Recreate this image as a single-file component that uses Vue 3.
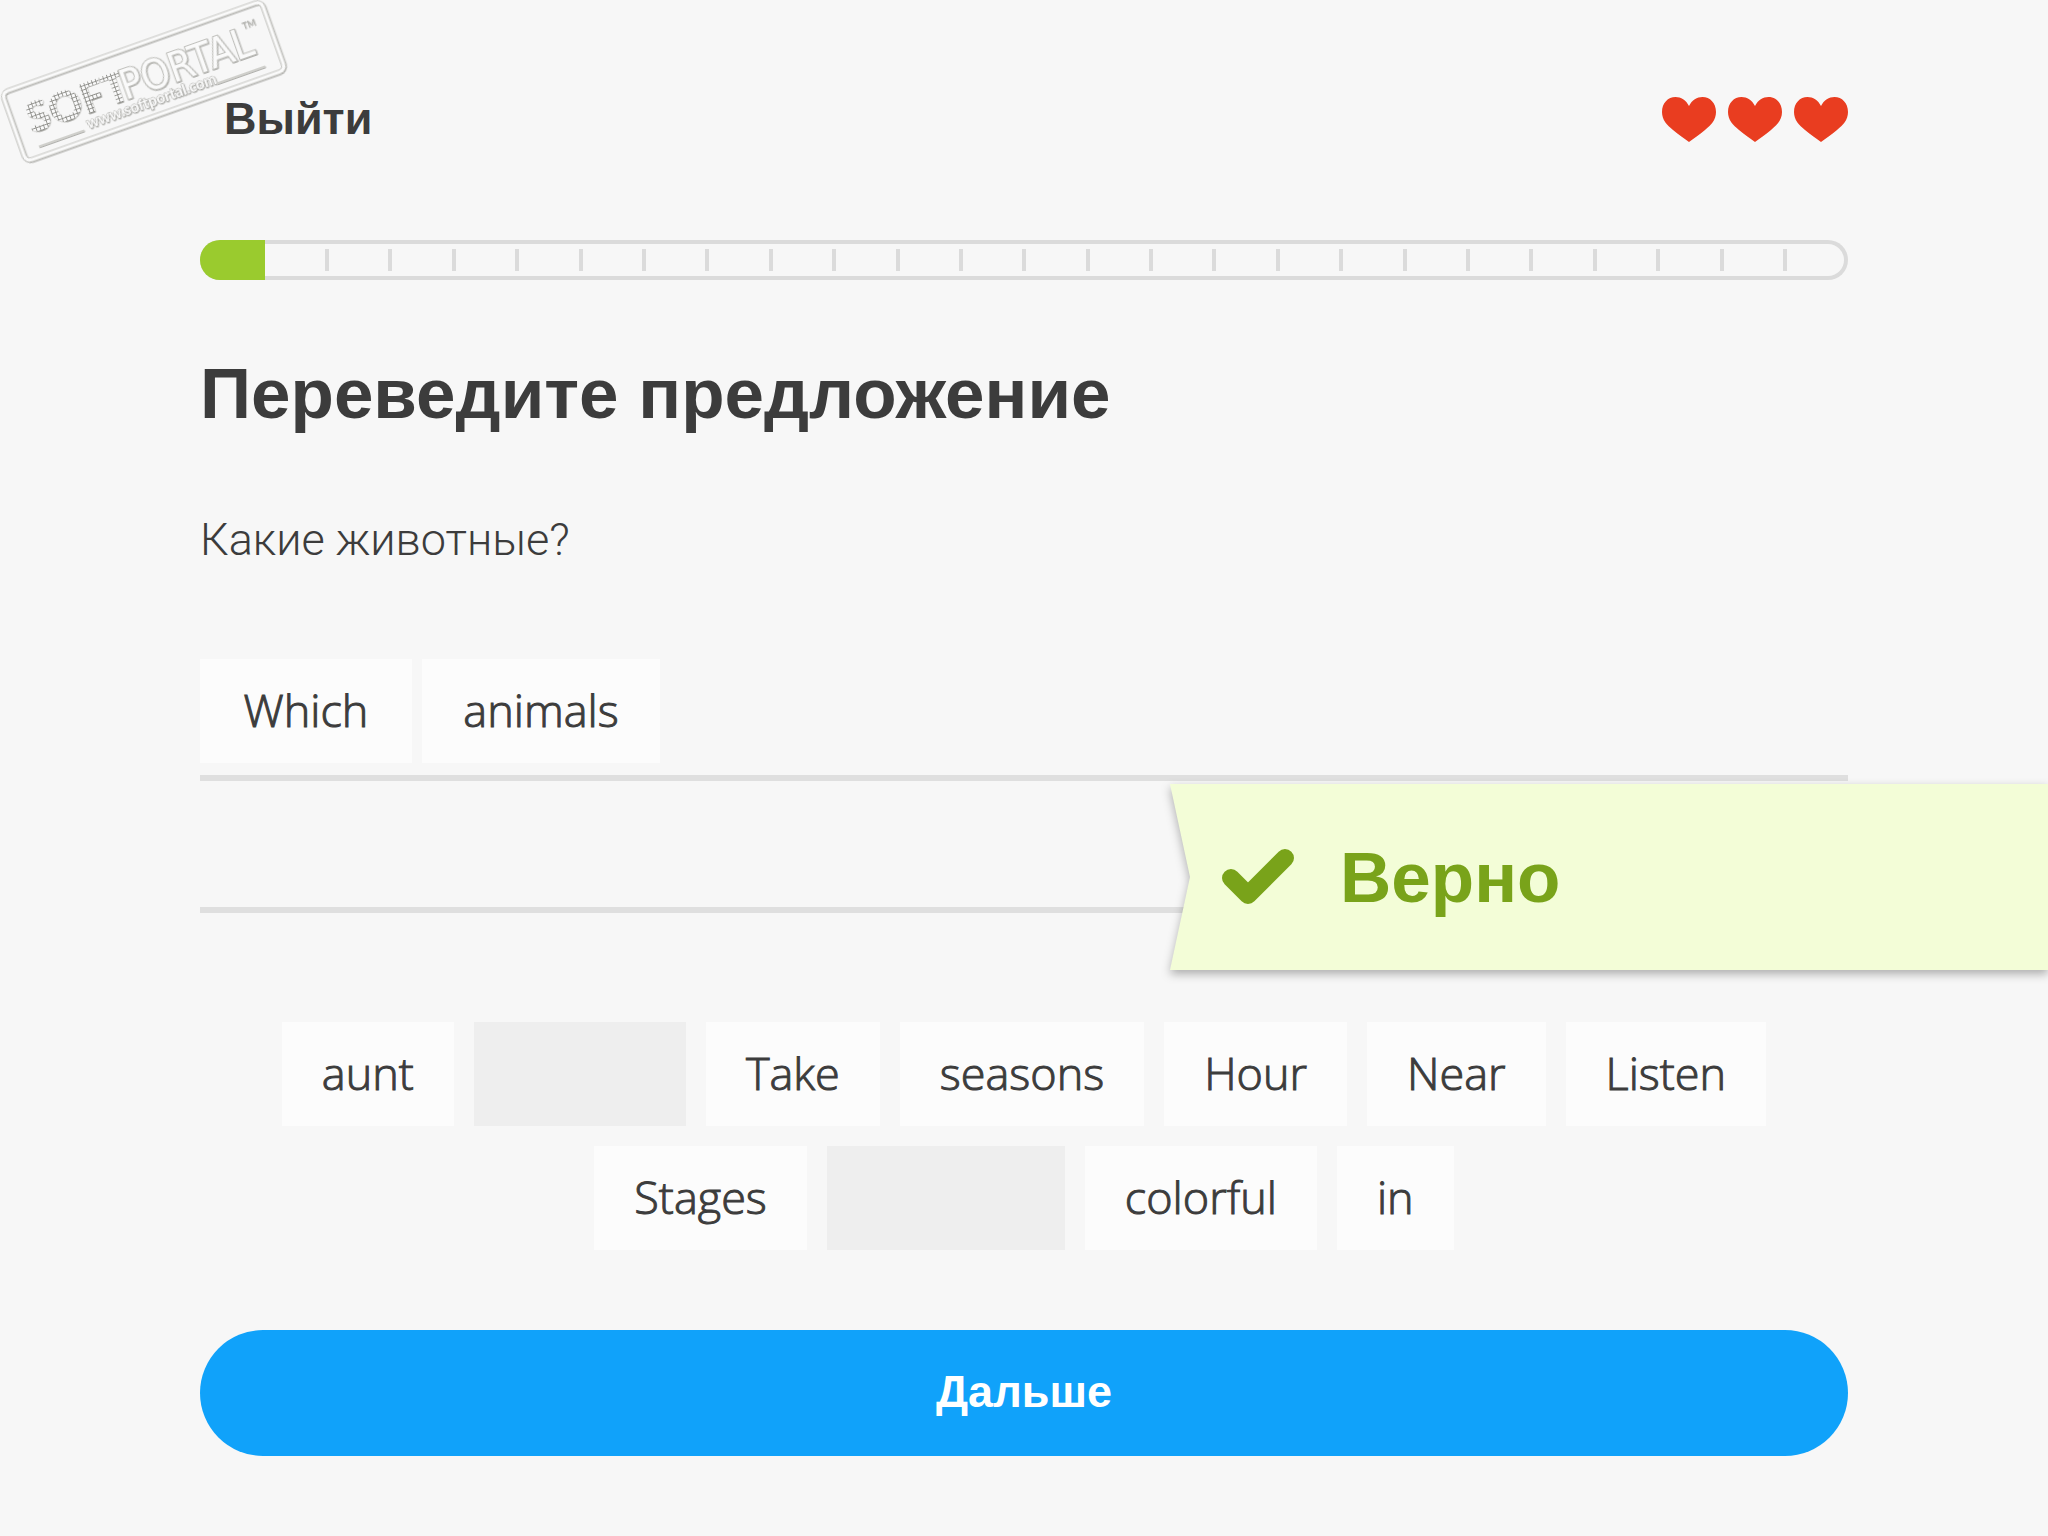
<script setup>
import { ref } from "vue"

const hearts = 3
const ticks = 24

// placed words keep the width of the slot they came from
const answer = ref([
	{ word: "Which", width: 212 },
	{ word: "animals", width: 238 },
])

const bank = ref([
	{ word: "aunt" },
	{ slot: 212 },
	{ word: "Take" },
	{ word: "seasons" },
	{ word: "Hour" },
	{ word: "Near" },
	{ word: "Listen" },
	{ word: "Stages" },
	{ slot: 238 },
	{ word: "colorful" },
	{ word: "in" },
])
</script>

<template>
	<div class="lesson">
		<svg class="stamp" viewBox="0 0 290 168" role="img" aria-label="SoftPortal">
			<defs>
				<pattern id="grid" width="4" height="4" patternUnits="userSpaceOnUse">
					<rect width="4" height="4" fill="#8f8f8a" />
					<rect width="3" height="3" fill="#fafafa" />
				</pattern>
				<filter id="emboss" x="-5%" y="-20%" width="110%" height="140%">
					<feDropShadow dx="0.4" dy="0.8" stdDeviation="0.4" flood-color="#77776f" flood-opacity="0.7" />
				</filter>
			</defs>
			<g transform="translate(-2 91) rotate(-19.5)" filter="url(#emboss)">
				<rect class="stamp-frame" x="3" y="3" width="275" height="73" rx="6" />
				<rect class="stamp-edge" x="1" y="1" width="279" height="77" rx="8" />
				<rect class="stamp-edge" x="5" y="5" width="271" height="69" rx="4" />
				<text class="stamp-soft" x="18" y="52">SOFT</text>
				<text class="stamp-portal" x="117" y="51">PORTAL</text>
				<text class="stamp-tm" x="252" y="24">TM</text>
				<text class="stamp-url" x="73" y="66">www.softportal.com</text>
				<path class="stamp-line" d="M20 66H68M209 66H260" />
			</g>
		</svg>

		<header class="top">
			<button type="button" class="quit">Выйти</button>
			<div class="hearts">
				<svg v-for="n in hearts" :key="n" class="heart" viewBox="0 0 54 45">
					<path d="M27 9C24 3 19 0 13.500 0C6 0 0 6 0 15C0 23 5 28 11 33C17 38 22 41 27 45C32 41 37 38 43 33C49 28 54 23 54 15C54 6 48 0 40.500 0C35 0 30 3 27 9Z" />
				</svg>
			</div>
		</header>

		<div class="progress" role="progressbar" aria-valuemin="0" aria-valuemax="26" aria-valuenow="1">
			<div class="progress-fill"></div>
			<div class="progress-ticks">
				<span v-for="n in ticks" :key="n" class="tick"></span>
			</div>
		</div>

		<h1 class="title">Переведите предложение</h1>
		<p class="question">Какие животные?</p>

		<div class="answer">
			<div class="answer-row">
				<button
					v-for="item in answer"
					:key="item.word"
					type="button"
					class="chip"
					:style="{ minWidth: item.width + 'px' }">
					{{ item.word }}
				</button>
			</div>
			<div class="answer-row"></div>

			<div class="verdict" role="status">
				<div class="verdict-body">
					<svg class="check" viewBox="0 0 72 56">
						<path d="M9 29L26 46L63 9" />
					</svg>
					<span>Верно</span>
				</div>
			</div>
		</div>

		<div class="bank">
			<template v-for="(item, i) in bank" :key="i">
				<button v-if="item.word" type="button" class="chip">{{ item.word }}</button>
				<span v-else class="slot" :style="{ width: item.slot + 'px' }"></span>
			</template>
		</div>

		<button type="button" class="next">Дальше</button>
	</div>
</template>

<style>
body {
	background: #f7f7f7;
}
</style>

<style scoped>
.lesson {
	position: relative;
	display: flex;
	flex-direction: column;
	min-height: 100vh;
	box-sizing: border-box;
	padding: 0 200px 79px;
	overflow: hidden;
	background: #f7f7f7;
	color: #3c3c3c;
	font-family: "Liberation Sans", Arial, sans-serif;
}

button {
	margin: 0;
	border: 0;
	font-family: inherit;
	color: inherit;
	cursor: pointer;
}

/* stamp in the corner */
.stamp {
	position: absolute;
	top: 0;
	left: 0;
	width: 290px;
	height: 168px;
	font-family: Lato, sans-serif;
}

.stamp-frame {
	fill: none;
	stroke: #fafafa;
	stroke-width: 4;
}

.stamp-edge {
	fill: none;
	stroke: #c8c8c4;
	stroke-width: 1;
}

.stamp-soft {
	fill: url(#grid);
	font-size: 42px;
	font-weight: 900;
}

.stamp-portal {
	fill: #fafafa;
	stroke: #c0c0bc;
	stroke-width: 2;
	paint-order: stroke;
	font-family: "DejaVu Sans Condensed", "DejaVu Sans", sans-serif;
	font-size: 41px;
}

.stamp-tm {
	fill: #b4b4b0;
	font-size: 9px;
}

.stamp-url {
	fill: #fafafa;
	stroke: #b0b0ac;
	stroke-width: 1;
	paint-order: stroke;
	font-size: 15px;
	font-weight: 700;
}

.stamp-line {
	stroke: #d0d0cc;
	stroke-width: 2;
}

/* header */
.top {
	display: flex;
	align-items: center;
	justify-content: space-between;
	height: 240px;
	box-sizing: border-box;
	padding-bottom: 2px;
}

.quit {
	padding: 0 24px;
	background: none;
	font-size: 45px;
	font-weight: 700;
	line-height: 52px;
}

.hearts {
	display: flex;
	gap: 12px;
}

.heart {
	width: 54px;
	height: 45px;
	fill: #e93d20;
}

/* progress */
.progress {
	position: relative;
	height: 40px;
	border-radius: 20px;
	overflow: hidden;
	box-shadow: inset 0 0 0 4px #dbdbdb;
}

.progress-fill {
	width: 65px;
	height: 100%;
	background: #9acb2e;
}

.progress-ticks {
	position: absolute;
	inset: 0;
	display: flex;
	align-items: center;
	justify-content: space-between;
	padding: 0 61px 0 125px;
}

.tick {
	width: 4px;
	height: 22px;
	background: #dbdbdb;
}

/* exercise */
.title {
	margin: 74px 0 0;
	font-size: 71px;
	font-weight: 700;
	line-height: 80px;
}

.question {
	margin: 80px 0 0;
	font-family: Roboto, "Liberation Sans", sans-serif;
	font-size: 45px;
	font-weight: 300;
	line-height: 52px;
}

.answer {
	position: relative;
	margin-top: 83px;
}

.answer-row {
	display: flex;
	align-items: flex-end;
	gap: 10px;
	height: 132px;
	box-sizing: border-box;
	padding-bottom: 12px;
	border-bottom: 6px solid #dfdfdf;
}

.chip {
	height: 104px;
	padding: 0 40px 2px;
	background: #fcfcfc;
	font-family: "Open Sans", sans-serif;
	font-size: 45px;
	font-weight: 300;
	line-height: 102px;
	-webkit-text-stroke: 1px #3c3c3c;
}

.slot {
	height: 104px;
	background: #eeeeee;
}

.bank {
	display: flex;
	flex-wrap: wrap;
	justify-content: center;
	gap: 20px;
	margin-top: 109px;
}

/* result ribbon, runs off the right edge */
.verdict {
	position: absolute;
	top: 135px;
	right: -200px;
	width: 878px;
	filter: drop-shadow(0 4px 5px rgba(0, 0, 0, 0.3));
}

.verdict-body {
	display: flex;
	align-items: center;
	gap: 46px;
	height: 186px;
	padding-left: 52px;
	clip-path: polygon(0 0, 100% 0, 100% 100%, 0 100%, 20px 50%);
	background: #f3fdd7;
	color: #79a31a;
	font-size: 71px;
	font-weight: 700;
}

.check {
	width: 72px;
	height: 56px;
	fill: none;
	stroke: #79a31a;
	stroke-width: 18;
	stroke-linecap: round;
	stroke-linejoin: round;
}

.next {
	height: 126px;
	margin-top: 80px;
	padding: 0 24px 2px;
	border-radius: 63px;
	background: #10a2fa;
	color: #ffffff;
	font-size: 45px;
	font-weight: 700;
}
</style>
